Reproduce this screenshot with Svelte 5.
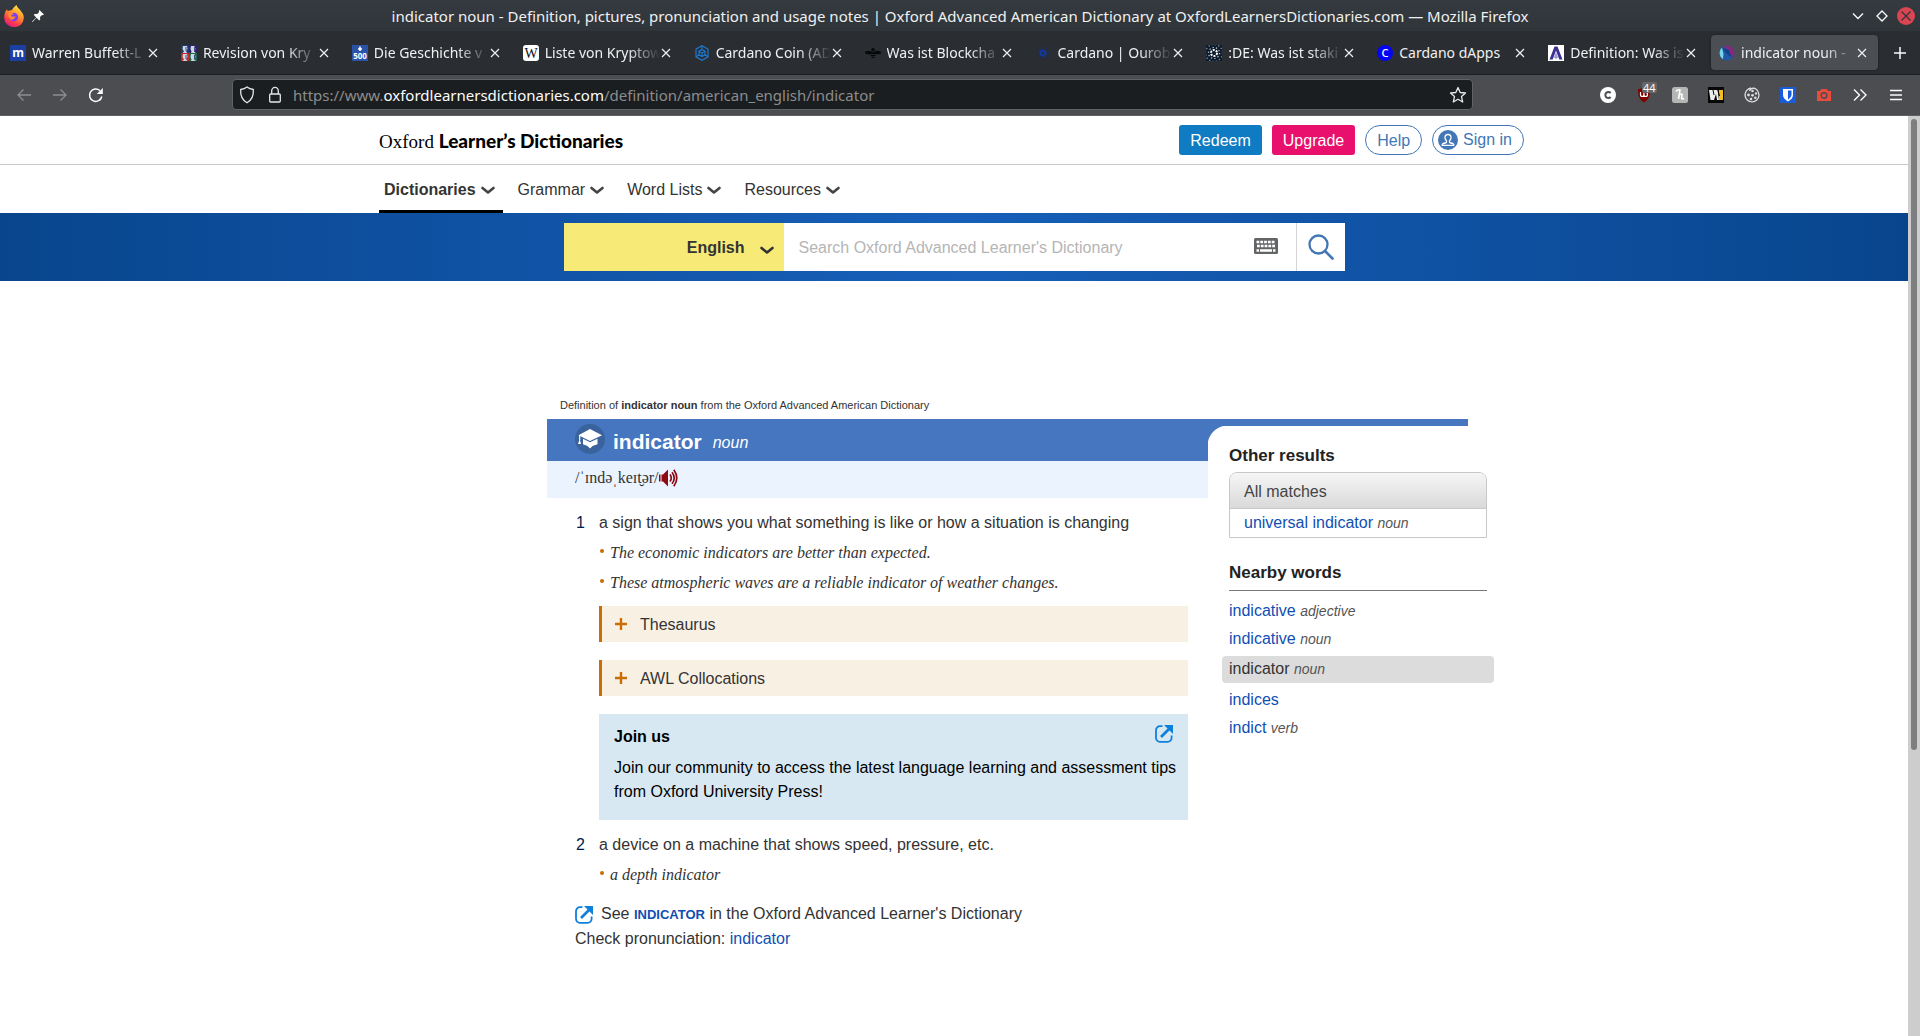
<script>
  const tabs = [
    { icon: 'm', title: 'Warren Buffett-L' },
    { icon: 'faces', title: 'Revision von Kry' },
    { icon: '500', title: 'Die Geschichte v' },
    { icon: 'wiki', title: 'Liste von Kryptow' },
    { icon: 'cube', title: 'Cardano Coin (AD' },
    { icon: 'bee', title: 'Was ist Blockcha' },
    { icon: 'dots', title: 'Cardano | Ourob' },
    { icon: 'ada', title: ':DE: Was ist staki' },
    { icon: 'c', title: 'Cardano dApps', whole: true },
    { icon: 'a', title: 'Definition: Was is' },
    { icon: 'oxford', title: 'indicator noun - ', active: true },
  ];
  const menu = ['Dictionaries', 'Grammar', 'Word Lists', 'Resources'];
  const nearby = [
    { word: 'indicative', pos: 'adjective' },
    { word: 'indicative', pos: 'noun' },
    { word: 'indicator', pos: 'noun', current: true },
    { word: 'indices', pos: '' },
    { word: 'indict', pos: 'verb' },
  ];
  const senses = [
    {
      text: 'a sign that shows you what something is like or how a situation is changing',
      examples: [
        'The economic indicators are better than expected.',
        'These atmospheric waves are a reliable indicator of weather changes.',
      ],
      boxes: ['Thesaurus', 'AWL Collocations'],
      promo: true,
    },
    {
      text: 'a device on a machine that shows speed, pressure, etc.',
      examples: ['a depth indicator'],
      boxes: [],
    },
  ];
  const extensions = ['cc', 'ublock', 'honey', 'w', 'cookie', 'shield', 'camera', 'more', 'menu'];
</script>

{#snippet favicon(kind)}
  <svg class="fav" viewBox="0 0 16 16" aria-hidden="true">
    {#if kind === 'm'}
      <rect width="16" height="16" fill="#1c3fa4" />
      <text x="8" y="12" class="glyph" font-size="12" fill="#fff">m</text>
    {:else if kind === 'faces'}
      <rect width="8" height="8" fill="#1d3a6b" /><rect x="8" width="8" height="8" fill="#31206c" />
      <rect y="8" width="8" height="8" fill="#c3262d" /><rect x="8" y="8" width="8" height="8" fill="#1c6b45" />
      <g fill="#cdd8e4">
        <path d="M2 1h4l.5 3L5 6.500l1.500 1.500h-5L3 6.500 1.500 4zM10 1h3.500l1 3-1.500 2.500L15 8h-5l.5-1.500L9.500 4z" />
        <path d="M2 9h4l.5 3L5 14.500 6.500 16h-5L3 14.500 1.500 12zM10 9h3.500l1 3-1.500 2.500L15 16h-5l.5-1.500L9.500 12z" />
      </g>
      <path d="M5 2v4M13.500 2v4M5 10v4M13.500 10v4" stroke="#3c4c86" />
    {:else if kind === '500'}
      <rect width="16" height="16" fill="#2b54a8" />
      <path d="M8 1.500v4.500M6 4h4" stroke="#fff" stroke-width="1.600" />
      <text x="8" y="14" class="glyph" font-size="8" fill="#fff">500</text>
    {:else if kind === 'wiki'}
      <rect width="16" height="16" rx="3" fill="#fff" />
      <text x="8" y="13" class="glyph serif" font-size="14" fill="#111">W</text>
    {:else if kind === 'cube'}
      <g fill="none" stroke="#1b78cf" stroke-width="1.200">
        <path d="M8 .8 14 4.200v7.600L8 15.200 2 11.800V4.200z" />
        <path d="M8 4.500 11 6.200v3.600L8 11.500 5 9.800V6.200zM5 6.200l3 1.700 3-1.700M8 7.900v3.600M8 .8v3.700M2 11.800l3-2M14 11.800l-3-2" />
      </g>
    {:else if kind === 'bee'}
      <g fill="#08090a">
        <ellipse cx="3.500" cy="7.500" rx="3.500" ry="1.800" /><ellipse cx="12.500" cy="7.500" rx="3.500" ry="1.800" />
        <circle cx="8" cy="4.800" r="1.800" /><rect x="5.500" y="7" width="5" height="2" />
        <rect x="5.500" y="9.700" width="5" height="1.300" /><rect x="6.500" y="11.600" width="3" height="1.300" />
      </g>
    {:else if kind === 'dots'}
      <circle cx="8" cy="8" r="5.500" fill="none" stroke="#1e2c55" stroke-width="1.500" stroke-dasharray="1.500 2" />
      <circle cx="8" cy="8" r="2.500" fill="none" stroke="#0d3bb5" stroke-width="2.500" stroke-dasharray="2 .6" />
    {:else if kind === 'ada'}
      <rect width="16" height="16" fill="#0c1a2b" />
      <circle cx="8" cy="8" r="3" fill="none" stroke="#fff" stroke-width="2" stroke-dasharray="2 1.140" />
      <circle cx="8" cy="8" r="5.500" fill="none" stroke="#c4d0d8" stroke-width="1.200" stroke-dasharray="1.300 2.100" />
      <circle cx="8" cy="8" r="8.500" fill="none" stroke="#6f8796" stroke-width="1.500" stroke-dasharray="1.300 2.100" />
    {:else if kind === 'c'}
      <circle cx="8" cy="8" r="8" fill="#0505f5" />
      <text x="8" y="12" class="glyph light" font-size="11" fill="#fff">C</text>
    {:else if kind === 'a'}
      <rect width="16" height="16" fill="#fff" />
      <path d="M1.500 14.500 6.500 1.500h3l5 13h-3.200L8 5.500l-3.300 9z" fill="#3d3091" />
      <path d="m8 7 2 5.500L8 14l-2-1.500z" fill="#9d97d4" />
    {:else}
      <circle cx="8" cy="8" r="7.500" fill="#2257a2" />
      <path d="M4.500 1.400A7.500 7.500 0 0 1 15.200 10L13 12.500 9.500 5z" fill="#822a7c" />
      <path d="M3 2.500A7.500 7.500 0 0 0 4 14.300L4.500 9z" fill="#74d3ee" />
      <path d="M3 2.500 9.500 5 13 12.500 8 9z" fill="#173f86" />
    {/if}
  </svg>
{/snippet}

{#snippet cross()}
  <svg width="12" height="12" viewBox="0 0 12 12" aria-hidden="true"><path d="m2 2 8 8M10 2l-8 8" stroke="currentColor" stroke-width="1.200" /></svg>
{/snippet}

{#snippet chevron()}
  <svg class="chev" width="14" height="9" viewBox="0 0 14 9" aria-hidden="true"><path d="m1.500 2 5.500 4.500L12.500 2" fill="none" stroke="currentColor" stroke-width="2.600" stroke-linecap="round" stroke-linejoin="round" /></svg>
{/snippet}

{#snippet external()}
  <svg class="ext" width="18" height="18" viewBox="0 0 18 18" aria-hidden="true">
    <path d="M7.500 1.200H5A4 4 0 0 0 1 5.200v7.600a4 4 0 0 0 4 4h7.600a4 4 0 0 0 4-4V10.500" fill="none" stroke="#0f7fdc" stroke-width="1.800" />
    <path d="M6 12 14 4" stroke="#0f7fdc" stroke-width="2.600" />
    <path d="M9 0h9v9z" fill="#0f7fdc" />
  </svg>
{/snippet}

<div class="window">
  <header class="titlebar">
    <div class="left">
      <svg width="20" height="22" viewBox="0 0 20 22" aria-hidden="true">
        <defs>
          <linearGradient id="flame" x1=".8" y1="0" x2=".3" y2="1">
            <stop offset="0" stop-color="#fff04a" /><stop offset=".4" stop-color="#ff9a2b" />
            <stop offset=".75" stop-color="#ff3f4a" /><stop offset="1" stop-color="#e31587" />
          </linearGradient>
        </defs>
        <path d="M12.500 0c.5 2.500 3 3.800 4.500 6.200 2 2 3 4.500 2.700 7.300A9.700 8.900 0 0 1 .3 13C0 9.500 1.200 6.500 3 4.300l.8 2C5 5.400 6.300 5 7.800 5.200 9 3.200 10.300 1.800 12.500 0" fill="url(#flame)" />
        <circle cx="9.800" cy="12" r="4.300" fill="#7a3ff2" />
        <path d="M4.500 8.500c2-1.500 4-.8 5.500.8-1.500 0-2.300.7-2.800 1.700 1 1 2.800.8 4.300.3-.3 2.500-3 4.200-5.200 3C4.500 13 3.800 10.500 4.500 8.500" fill="#ff8a30" />
      </svg>
      <svg width="12" height="12" viewBox="0 0 12 12" aria-hidden="true"><path d="M7.500 0 12 4.500l-1.300.7-.7-.3-2 2 .2 2.600-1 .9L4.500 7.700.8 11.800 0 12l.3-.8L4.200 7.500 1.700 4.800l1-.9 2.500.1 2-2-.4-.8z" fill="#fcfcfc" /></svg>
    </div>
    <div class="wtitle">indicator noun - Definition, pictures, pronunciation and usage notes | Oxford Advanced American Dictionary at OxfordLearnersDictionaries.com — Mozilla Firefox</div>
    <div class="controls">
      <button aria-label="Minimize"><svg width="18" height="18" viewBox="0 0 18 18"><path d="m4 6.500 5 5 5-5" fill="none" stroke="#fcfcfc" stroke-width="1.300" /></svg></button>
      <button aria-label="Maximize"><svg width="18" height="18" viewBox="0 0 18 18"><path d="m9 4 5 5-5 5-5-5z" fill="none" stroke="#fcfcfc" stroke-width="1.300" /></svg></button>
      <button aria-label="Close"><svg width="18" height="18" viewBox="0 0 18 18"><circle cx="9" cy="9" r="9" fill="#da4453" /><path d="m4.500 4.500 9 9M13.500 4.500l-9 9" stroke="#31363b" stroke-width="1.300" /></svg></button>
    </div>
  </header>

  <nav class="tabs" aria-label="Tabs">
    {#each tabs as tab}
      <div class="tab" class:active={tab.active}>
        {@render favicon(tab.icon)}
        <span class="label" class:whole={tab.whole}>{tab.title}</span>
        <button aria-label="Close tab">{@render cross()}</button>
      </div>
    {/each}
    <button class="newtab" aria-label="New tab"><svg width="14" height="14" viewBox="0 0 14 14"><path d="M7 1v12M1 7h12" stroke="#fcfcfc" stroke-width="1.500" /></svg></button>
  </nav>

  <div class="toolbar">
    <div class="history">
      <button aria-label="Back"><svg width="16" height="16" viewBox="0 0 16 16"><path d="M15 8H2M7.500 2.500 2 8l5.500 5.500" fill="none" stroke="#8b8e91" stroke-width="1.300" /></svg></button>
      <button aria-label="Forward"><svg width="16" height="16" viewBox="0 0 16 16"><path d="M1 8h13M8.500 2.500 14 8l-5.500 5.500" fill="none" stroke="#8b8e91" stroke-width="1.300" /></svg></button>
      <button aria-label="Reload"><svg width="16" height="16" viewBox="0 0 16 16"><path d="M13.800 9.500A6.200 6.200 0 1 1 12 3.700" fill="none" stroke="#fcfcfc" stroke-width="1.500" /><path d="M14.800 1v6H8.800z" fill="#fcfcfc" /></svg></button>
    </div>
    <div class="url">
      <svg width="16" height="18" viewBox="0 0 16 18" aria-hidden="true"><path d="M8 1c2 1.700 4 2.300 6.300 2.500.4 5.500-1.300 10.500-6.300 13.200C3 14 1.300 9 1.700 3.500 4 3.300 6 2.700 8 1z" fill="none" stroke="#e6e7e8" stroke-width="1.300" /></svg>
      <svg width="14" height="18" viewBox="0 0 14 18" aria-hidden="true"><path d="M3.700 8V5a3.300 3.600 0 0 1 6.600 0v3" fill="none" stroke="#e6e7e8" stroke-width="1.300" /><rect x="1.700" y="8" width="10.600" height="8" rx="1" fill="none" stroke="#e6e7e8" stroke-width="1.300" /></svg>
      <span class="addr">https://www.<b>oxfordlearnersdictionaries.com</b>/definition/american_english/indicator</span>
      <button aria-label="Bookmark"><svg width="18" height="18" viewBox="0 0 18 18"><path d="m9 1.500 2.200 5 5.300.5-4 3.600 1.200 5.400L9 13.200 4.300 16l1.200-5.400-4-3.600 5.300-.5z" fill="none" stroke="#e6e7e8" stroke-width="1.300" stroke-linejoin="round" /></svg></button>
    </div>
    <div class="exts">
      {#each extensions as e}
        <button aria-label={e}>
          <svg width="16" height="16" viewBox="0 0 16 16">
            {#if e === 'cc'}
              <circle cx="8" cy="8" r="8" fill="#fff" /><path d="M10.600 6A3 3 0 1 0 10.600 10" fill="none" stroke="#4a4d52" stroke-width="2" />
            {:else if e === 'ublock'}
              <path d="M8 0c2 1.500 4 2 6 2 0 6-1 10.500-6 13.500C3 12.500 2 8 2 2c2 0 4-.5 6-2" fill="#800000" />
              <path d="M4.500 5v2.500q0 2 1.700 2t1.700-2V5.500M7.900 7.500q0 2 1.800 2t1.800-2-1.800-2" fill="none" stroke="#fff" stroke-width="1.200" />
            {:else if e === 'honey'}
              <rect width="16" height="16" rx="2.500" fill="#b5b5b6" />
              <path d="M4 4.500Q6 2 8 3L6.500 12M6.800 8.500Q10.500 5.500 10 8.500l-.5 3q.5 1 2.500 0" fill="none" stroke="#fff" stroke-width="1.600" />
            {:else if e === 'w'}
              <rect width="16" height="16" fill="#060606" />
              <path d="m1 3 1.500 10H6L8 7l1 6h2L9.500 3z" fill="#eee" /><path d="M11 3h4v10h-4z" fill="#f5bd1d" /><path d="m5 3 1 5M10 3l1.500 6" stroke="#060606" />
            {:else if e === 'cookie'}
              <path d="M7 1a7 7 0 1 0 8 7.500M5.500 4Q7 .5 11 1.500q3.500 1.500 4 7" fill="none" stroke="#dcdddd" stroke-width="1.300" />
              <g fill="#dcdddd"><circle cx="8.500" cy="4" r="1.300" /><circle cx="4.500" cy="8" r="1.400" /><circle cx="8.500" cy="8.300" r="1.400" /><circle cx="12" cy="6.500" r="1.200" /><circle cx="7" cy="12" r="1.300" /><circle cx="11.300" cy="10.800" r="1.300" /></g>
            {:else if e === 'shield'}
              <rect width="16" height="16" rx="1.500" fill="#175ddc" />
              <path d="M3 2h10v6q0 3.500-5 6.500Q3 11.500 3 8z" fill="#fff" /><path d="M8 3.500h3.500V8q0 2.500-3.500 4.700z" fill="#175ddc" />
            {:else if e === 'camera'}
              <path d="M1 4h3l1.200-2h5.600L12 4h3v10H1z" fill="#e74c3c" /><circle cx="8" cy="8.500" r="2.800" fill="none" stroke="#4a4d52" stroke-width="1.400" />
            {:else if e === 'more'}
              <path d="m2 2.500 5.500 5.500L2 13.500M8.500 2.500 14 8l-5.500 5.500" fill="none" stroke="#fcfcfc" stroke-width="1.400" />
            {:else}
              <path d="M2 3.500h12M2 8h12M2 12.500h12" stroke="#fcfcfc" stroke-width="1.500" />
            {/if}
          </svg>
          {#if e === 'ublock'}<span class="badge">44</span>{/if}
        </button>
      {/each}
    </div>
  </div>

  <div class="viewport">
    <div class="page">
      <header class="site">
        <div class="container">
          <a class="logo" href="/"><span>Oxford</span> <b>Learner’s Dictionaries</b></a>
          <div class="actions">
            <a class="btn redeem" href="#redeem">Redeem</a>
            <a class="btn upgrade" href="#upgrade">Upgrade</a>
            <a class="btn pill" href="#help">Help</a>
            <a class="btn pill signin" href="#signin">
              <svg width="20" height="20" viewBox="0 0 20 20" aria-hidden="true"><circle cx="10" cy="10" r="10" fill="#4376b5" /><path d="M8.500 10.800V12Q8.300 13 5 13.500q-.8.500-.8 1.800h11.600q0-1.300-.8-1.800-3.300-.5-3.500-1.500v-1.200Q13 9.500 13 7.500 13 4.500 10 4.500T7 7.500q0 2 1.500 3.300z" fill="none" stroke="#fff" stroke-width="1.300" /></svg>
              Sign in
            </a>
          </div>
        </div>
      </header>

      <nav class="menu" aria-label="Main">
        <div class="container">
          {#each menu as item, i}
            <a href="#{item}" class:on={i === 0}>{item}{@render chevron()}</a>
          {/each}
        </div>
      </nav>

      <form class="hero" onsubmit={(e) => e.preventDefault()}>
        <div class="lang">
          <select aria-label="Dictionary"><option>English</option></select>
          {@render chevron()}
        </div>
        <div class="query">
          <input type="text" aria-label="Search" placeholder="Search Oxford Advanced Learner's Dictionary" />
          <button type="button" aria-label="Keyboard">
            <svg width="24" height="16" viewBox="0 0 24 16"><rect width="24" height="16" rx="1.500" fill="#636466" /><path d="M2.500 4h19M3 8h18" stroke="#fff" stroke-width="2.600" stroke-dasharray="2.800 1" /><path d="M2.500 12.500h2.500M6 12.500h12M19 12.500h2.500" stroke="#fff" stroke-width="2.400" /></svg>
          </button>
        </div>
        <button class="go" aria-label="Search"><svg width="26" height="26" viewBox="0 0 26 26"><circle cx="10.500" cy="10.500" r="9" fill="none" stroke="#4376b5" stroke-width="2.300" /><path d="m17 17 7.500 7.500" stroke="#4376b5" stroke-width="2.600" stroke-linecap="round" /></svg></button>
      </form>

      <main class="container content">
        <p class="crumb">Definition of <b>indicator noun</b> from the Oxford Advanced American Dictionary</p>
        <article>
          <div class="head">
            <svg width="30" height="30" viewBox="0 0 30 30" aria-hidden="true"><circle cx="15" cy="15" r="15" fill="#3a629c" /><path d="M15 5 27 11.200 15 17 3.500 11.200z" fill="#fff" /><path d="M8 14.800 15 18.300l7.500-3.500v5.400L17.500 22 15 24.500 12.500 22 8 20.200z" fill="#fff" /><path d="M4.700 11v5" stroke="#fff" stroke-width="1.200" /><path d="M4.700 15 6 20H3z" fill="#fff" /></svg>
            <h1>indicator</h1>
            <span class="pos">noun</span>
          </div>
          <div class="phon">
            <span>/ˈɪndəˌkeɪt̮ər/</span>
            <button aria-label="Play pronunciation"><svg width="20" height="18" viewBox="0 0 20 18"><path d="M0 5.500h1.500v7H0zM2.500 5.500H4L9 .5v17L4 12.500H2.500z" fill="#8e0b12" /><path d="M11 5.500q2.600 3.500 0 7M13 3.200q4.500 5.800 0 11.600M14.800.8q6 8.200 0 16.400" fill="none" stroke="#8e0b12" stroke-width="1.700" /></svg></button>
          </div>
          <ol class="senses">
            {#each senses as s, i}
              <li>
                <span class="num">{i + 1}</span>
                <div class="def">
                  <p>{s.text}</p>
                  <ul>
                    {#each s.examples as x}<li>{x}</li>{/each}
                  </ul>
                  {#if s.boxes.length}
                    <div class="boxes">
                      {#each s.boxes as b}
                        <button><svg width="12" height="12" viewBox="0 0 12 12" aria-hidden="true"><path d="M6 0v12M0 6h12" stroke="#c76e06" stroke-width="2.400" /></svg><span>{b}</span></button>
                      {/each}
                      {#if s.promo}
                        <a class="promo" href="#join">
                          <span class="row"><b>Join us</b>{@render external()}</span>
                          <span class="copy">Join our community to access the latest language learning and assessment tips from Oxford University Press!</span>
                        </a>
                      {/if}
                    </div>
                  {/if}
                </div>
              </li>
            {/each}
          </ol>
          <div class="refs">
            <p class="see">{@render external()}<span>See <a class="caps" href="#indicator">INDICATOR</a> in the Oxford Advanced Learner's Dictionary</span></p>
            <p>Check pronunciation: <a href="#pron">indicator</a></p>
          </div>
        </article>
        <aside>
          <div class="panel">
            <h2>Other results</h2>
            <div class="matches">
              <div class="mh">All matches</div>
              <div class="mr"><a href="#ui">universal indicator</a> <i>noun</i></div>
            </div>
            <h2 class="ruled">Nearby words</h2>
            <ul class="near">
              {#each nearby as n}
                <li class:current={n.current}><a href="#{n.word}">{n.word}</a> <i>{n.pos}</i></li>
              {/each}
            </ul>
          </div>
        </aside>
      </main>
    </div>
    <div class="scroll"><div class="thumb"></div></div>
  </div>
</div>

<style>
  :global(body) { margin: 0; background: #fff; }
  .window { min-height: 100vh; display: flex; flex-direction: column; font: 16px/24px "Liberation Sans", Arial, sans-serif; color: #333; }
  * { box-sizing: border-box; }
  button { appearance: none; border: 0; padding: 0; background: none; color: inherit; font: inherit; display: flex; align-items: center; justify-content: center; }
  svg { display: block; flex: none; }
  a { color: #0f4fb3; text-decoration: none; }
  p, h1, h2, ul, ol { margin: 0; padding: 0; list-style: none; }
  .glyph { text-anchor: middle; font-family: "Noto Sans", sans-serif; font-weight: 700; }
  .glyph.serif { font-family: "Liberation Serif", serif; font-weight: 400; }
  .glyph.light { font-weight: 500; }

  .titlebar, .tabs, .toolbar { font: 15px/20px "Noto Sans", sans-serif; color: #fcfcfc; }
  .titlebar { height: 31px; display: grid; grid-template-columns: 1fr auto 1fr; align-items: center; background: linear-gradient(#343a3f, #30353a); }
  .left { display: flex; align-items: center; gap: 8px; padding-left: 4px; }
  .wtitle { white-space: nowrap; color: #eff0f1; }
  .controls { display: flex; justify-content: flex-end; gap: 6px; padding-right: 5px; }

  .tabs { height: 44px; display: flex; background: #2a2e32; border-bottom: 1px solid #1b1e20; padding: 4px 0; font-size: 14px; }
  .tab { flex: 1; min-width: 0; display: flex; align-items: center; padding: 0 10px 0 8px; margin: 0 2px; border-radius: 4px; color: #eff0f1; }
  .tab.active { background: #4b4f54; box-shadow: 0 0 3px #1b1e20; }
  .fav { width: 16px; height: 16px; margin-right: 6px; }
  .label { flex: 1; min-width: 0; white-space: nowrap; mask-image: linear-gradient(90deg, #000 calc(100% - 32px), transparent); }
  .label.whole { mask-image: none; }
  .newtab { width: 40px; }

  .toolbar { height: 41px; display: flex; background: #4b4d51; border-bottom: 1px solid #5f6265; padding: 4px 6px 5px; }
  .history { display: flex; width: 226px; flex: none; }
  .history button, .exts button { width: 36px; }
  .url { flex: 0 1 1241px; display: flex; align-items: center; background: #1b1e20; border: 1px solid #606366; border-radius: 4px; padding: 0 5px 0 6px; }
  .url > svg:first-child { margin-right: 13px; }
  .addr { flex: 1; margin-left: 11px; color: #8b8c8d; white-space: nowrap; overflow: hidden; }
  .addr b { font-weight: 400; color: #fcfcfc; }
  .exts { display: flex; flex: none; margin-left: auto; }
  .exts button { position: relative; }
  .badge { position: absolute; top: 3px; left: 16px; padding: 0 1px; border-radius: 2px; background: #666; font-size: 11px; line-height: 11px; }

  .viewport { flex: 1; display: flex; background: #fff; }
  .page { flex: 1; min-width: 0; }
  .scroll { width: 12px; background: #cdcdcd; padding: 3px; display: flex; flex-direction: column; }
  .thumb { width: 6px; height: 69%; border-radius: 3px; background: #7c7e80; }

  .container { max-width: 1150px; margin: 0 auto; display: flex; align-items: center; }
  .site { border-bottom: 1px solid #c8c8c8; }
  .site .container { height: 48px; justify-content: space-between; padding-right: 5px; }
  .logo { color: #000; white-space: nowrap; padding-top: 2px; font: 19px/24px "Liberation Serif", serif; }
  .logo b { font: 900 19px/24px Lato, sans-serif; }
  .actions { display: flex; gap: 10px; }
  .btn { height: 30px; padding: 1px 11px 0; border-radius: 3px; line-height: 30px; color: #fff; }
  .redeem { background: #0f7bc2; }
  .upgrade { background: #e8106c; }
  .pill { border: 1px solid #4376b5; border-radius: 15px; padding: 0 11px; line-height: 30px; color: #4376b5; }
  .signin { display: flex; align-items: center; gap: 5px; padding-left: 5px; }

  .menu .container { height: 48px; gap: 10px; align-items: stretch; }
  .menu a { display: flex; align-items: center; gap: 5px; padding: 4px 8px 0 5px; border-bottom: 3px solid transparent; color: #333; }
  .menu a.on { font-weight: 700; border-color: #000; }
  .menu .chev { margin-top: 2px; color: #444; }

  .hero { height: 68px; display: flex; justify-content: center; align-items: center; background: linear-gradient(90deg, #08458d, #175fb9 50%, #08458d); }
  .lang { position: relative; width: 220px; height: 48px; }
  .lang select { appearance: none; width: 100%; height: 100%; border: 0; border-radius: 0; background: #f7ea77; color: #333; font: 700 16px "Liberation Sans", sans-serif; text-align-last: right; padding: 0 39px 0 0; }
  .lang .chev { position: absolute; right: 10px; top: 23px; }
  .query { flex: 0 1 513px; height: 48px; display: flex; background: #fff; border-right: 1px solid #d4d4d4; }
  .query input { flex: 1; min-width: 0; border: 0; background: none; padding: 2px 15px 0; font: inherit; outline: 0; }
  .query input::placeholder { color: #b5b5b5; opacity: 1; }
  .query button { width: 60px; padding-bottom: 2px; }
  .go { width: 48px; height: 48px; background: #fff; }

  .content { display: grid; grid-template-columns: minmax(0, 661px) 286px; align-items: start; padding: 117px 0 0 168px; }
  .crumb { grid-column: 1 / -1; font-size: 11px; line-height: 14px; padding: 0 0 7px 13px; }
  .head { height: 42px; display: flex; align-items: flex-start; padding: 5px 28px 0; background: #4576bf; color: #fff; }
  .head h1 { font-size: 21px; line-height: 36px; margin: 0 11px 0 8px; }
  .pos { font-style: italic; line-height: 38px; }
  .phon { height: 37px; display: flex; align-items: center; padding: 0 28px 3px; background: #ebf3ff; font-family: "Liberation Serif", serif; }
  .senses { display: flex; flex-direction: column; gap: 13px; padding: 13px 20px 0 29px; }
  .senses > li { display: flex; }
  .num { width: 23px; flex: none; color: #001c4d; }
  .def { flex: 1; min-width: 0; }
  .def ul li { position: relative; margin-top: 6px; padding-left: 11px; font: italic 16px/24px "Liberation Serif", serif; }
  .def ul li::before { content: ''; position: absolute; left: 1px; top: 8px; width: 4px; height: 4px; border-radius: 50%; background: #c76e06; }
  .boxes { display: flex; flex-direction: column; gap: 18px; margin-top: 11px; }
  .boxes button { height: 36px; justify-content: flex-start; gap: 13px; padding-left: 13px; border-left: 3px solid #c76e06; background: #f9f0e4; color: #333; }
  .boxes button span { padding-top: 2px; }
  .promo { display: block; background: #d8e8f2; color: #000; padding: 11px 11px 16px 15px; }
  .row { display: flex; justify-content: space-between; margin: 0 4px 7px 0; }
  .copy { display: block; }
  .refs { padding: 15px 28px 0; }
  .see { display: flex; align-items: center; gap: 8px; }
  .caps { font-size: 13px; font-weight: 700; }

  aside::before { content: ''; display: block; width: 260px; height: 7px; background: #4576bf; }
  .panel { padding: 18px 7px 0 21px; background: radial-gradient(circle at 20px 20px, #fff 20px, #4576bf 21px) 0 0 / 20px 20px no-repeat; }
  h2 { font-size: 17px; line-height: 24px; color: #222; }
  .matches { margin: 4px 0 23px; border: 1px solid #c8c8c8; border-radius: 8px 8px 0 0; overflow: hidden; }
  .mh { padding: 2px 14px 0; line-height: 33px; background: linear-gradient(#f6f6f6, #d9d9d9); border-bottom: 1px solid #c8c8c8; color: #444; }
  .mr { padding: 0 14px; line-height: 28px; }
  i { font-size: 14px; color: #555; }
  .ruled { padding-bottom: 5px; border-bottom: 1px solid #777; }
  .near { display: flex; flex-direction: column; gap: 4px; padding-top: 8px; }
  .near .current { margin: 1px -7px; padding: 1px 7px 2px; border-radius: 4px; background: #dcdcdc; }
  .current a { color: #333; }
</style>
